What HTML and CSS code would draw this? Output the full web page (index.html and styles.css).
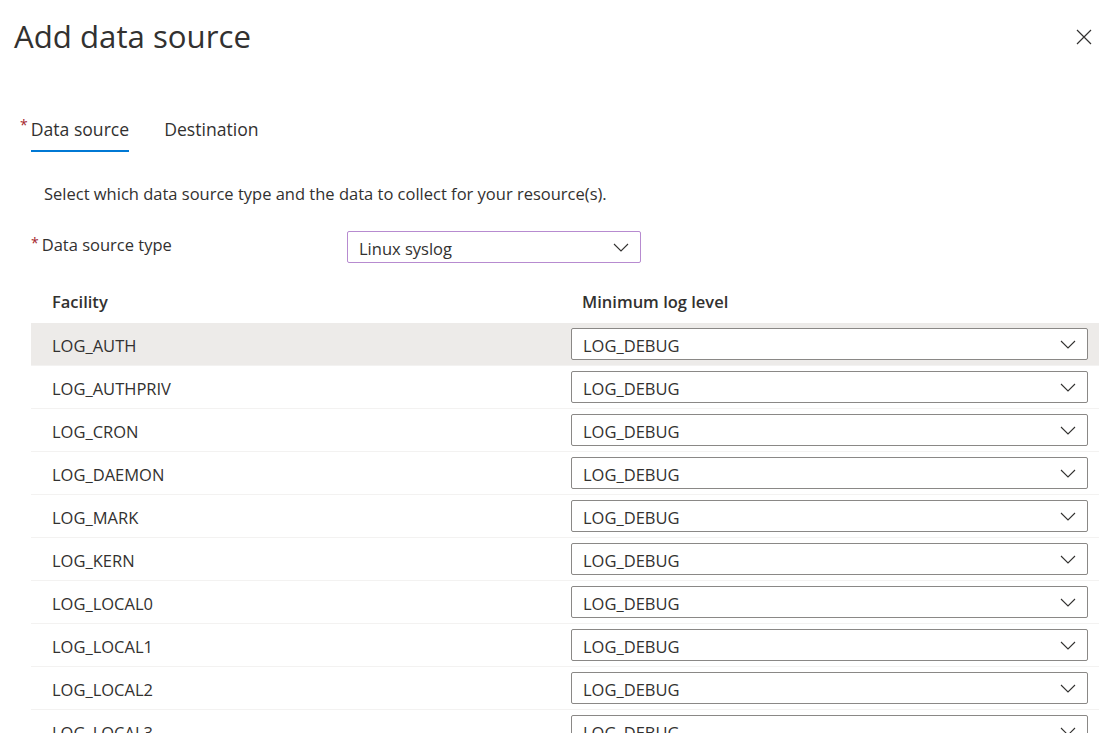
FILE: index.html
```html
<!DOCTYPE html>
<html lang="en">
<head>
<meta charset="utf-8">
<title>Add data source</title>
<link rel="stylesheet" href="styles.css">
</head>
<body>
<div class="panel">
  <div class="header">
    <h1 class="title">Add data source</h1>
    <button class="close" aria-label="Close">
      <svg width="16" height="16" viewBox="0 0 16 16"><path d="M1 1 L15 15 M15 1 L1 15" stroke="#323130" stroke-width="1.2" fill="none"/></svg>
    </button>
  </div>
  <div class="tabs">
    <div class="tab active"><span class="req">*</span><span class="tab-label">Data source</span></div>
    <div class="tab"><span class="tab-label">Destination</span></div>
  </div>
  <p class="desc">Select which data source type and the data to collect for your resource(s).</p>
  <div class="field">
    <label class="field-label"><span class="req">*</span>Data source type</label>
    <div class="select type-select"><span>Linux syslog</span><svg class="chev" width="16" height="16" viewBox="0 0 16 16"><path d="M1 5 L8 12 L15 5" stroke="#323130" stroke-width="1.1" fill="none"/></svg></div>
  </div>
  <div class="table">
    <div class="thead">
      <div class="cell c1">Facility</div>
      <div class="cell c2">Minimum log level</div>
    </div>
    <div class="row hover"><div class="cell c1">LOG_AUTH</div><div class="cell c2"><div class="select"><span>LOG_DEBUG</span><svg class="chev" width="16" height="16" viewBox="0 0 16 16"><path d="M1 5 L8 12 L15 5" stroke="#323130" stroke-width="1.1" fill="none"/></svg></div></div></div>
    <div class="row"><div class="cell c1">LOG_AUTHPRIV</div><div class="cell c2"><div class="select"><span>LOG_DEBUG</span><svg class="chev" width="16" height="16" viewBox="0 0 16 16"><path d="M1 5 L8 12 L15 5" stroke="#323130" stroke-width="1.1" fill="none"/></svg></div></div></div>
    <div class="row"><div class="cell c1">LOG_CRON</div><div class="cell c2"><div class="select"><span>LOG_DEBUG</span><svg class="chev" width="16" height="16" viewBox="0 0 16 16"><path d="M1 5 L8 12 L15 5" stroke="#323130" stroke-width="1.1" fill="none"/></svg></div></div></div>
    <div class="row"><div class="cell c1">LOG_DAEMON</div><div class="cell c2"><div class="select"><span>LOG_DEBUG</span><svg class="chev" width="16" height="16" viewBox="0 0 16 16"><path d="M1 5 L8 12 L15 5" stroke="#323130" stroke-width="1.1" fill="none"/></svg></div></div></div>
    <div class="row"><div class="cell c1">LOG_MARK</div><div class="cell c2"><div class="select"><span>LOG_DEBUG</span><svg class="chev" width="16" height="16" viewBox="0 0 16 16"><path d="M1 5 L8 12 L15 5" stroke="#323130" stroke-width="1.1" fill="none"/></svg></div></div></div>
    <div class="row"><div class="cell c1">LOG_KERN</div><div class="cell c2"><div class="select"><span>LOG_DEBUG</span><svg class="chev" width="16" height="16" viewBox="0 0 16 16"><path d="M1 5 L8 12 L15 5" stroke="#323130" stroke-width="1.1" fill="none"/></svg></div></div></div>
    <div class="row"><div class="cell c1">LOG_LOCAL0</div><div class="cell c2"><div class="select"><span>LOG_DEBUG</span><svg class="chev" width="16" height="16" viewBox="0 0 16 16"><path d="M1 5 L8 12 L15 5" stroke="#323130" stroke-width="1.1" fill="none"/></svg></div></div></div>
    <div class="row"><div class="cell c1">LOG_LOCAL1</div><div class="cell c2"><div class="select"><span>LOG_DEBUG</span><svg class="chev" width="16" height="16" viewBox="0 0 16 16"><path d="M1 5 L8 12 L15 5" stroke="#323130" stroke-width="1.1" fill="none"/></svg></div></div></div>
    <div class="row"><div class="cell c1">LOG_LOCAL2</div><div class="cell c2"><div class="select"><span>LOG_DEBUG</span><svg class="chev" width="16" height="16" viewBox="0 0 16 16"><path d="M1 5 L8 12 L15 5" stroke="#323130" stroke-width="1.1" fill="none"/></svg></div></div></div>
    <div class="row"><div class="cell c1">LOG_LOCAL3</div><div class="cell c2"><div class="select"><span>LOG_DEBUG</span><svg class="chev" width="16" height="16" viewBox="0 0 16 16"><path d="M1 5 L8 12 L15 5" stroke="#323130" stroke-width="1.1" fill="none"/></svg></div></div></div>
  </div>
</div>
</body>
</html>
```

FILE: styles.css
```css
* { box-sizing: border-box; }
html, body {
  margin: 0;
  padding: 0;
  background: #ffffff;
  overflow: hidden;
  height: 733px;
}
body {
  font-family: "Open Sans", "Noto Sans", "Liberation Sans", sans-serif;
  color: #323130;
  font-size: 16.5px;
}
.panel {
  width: 1113px;
}
.header {
  display: flex;
  justify-content: space-between;
  align-items: flex-start;
  padding: 12px 21px 0 14px;
  height: 108px;
}
.title {
  margin: 0;
  font-size: 31.2px;
  font-weight: 400;
  line-height: 48px;
  color: #323130;
}
.close {
  border: 0;
  background: transparent;
  padding: 0;
  margin-top: 17px;
  width: 16px;
  height: 16px;
  cursor: pointer;
}
.close svg { display: block; }
.tabs {
  display: flex;
  padding-left: 20px;
  gap: 35px;
  height: 44px;
}
.tab {
  display: flex;
  align-items: flex-start;
  height: 44px;
}
.tab-label {
  font-size: 17.6px;
  line-height: 42px;
  display: block;
}
.tab.active .tab-label {
  border-bottom: 2px solid #0078d4;
  height: 44px;
  font-weight: 500;
}
.req {
  color: #a4262c;
  font-size: 14px;
  line-height: 34px;
  margin-right: 3px;
}
.desc {
  margin: 30px 0 0 44px;
  font-size: 16.5px;
  line-height: 24px;
}
.field {
  display: flex;
  align-items: flex-start;
  margin: 25px 0 0 31px;
  height: 48px;
}
.field-label {
  width: 316px;
  font-size: 16.5px;
  line-height: 26px;
  padding-top: 1px;
  display: flex;
}
.field-label .req { line-height: 22px; }
.select {
  display: flex;
  align-items: center;
  justify-content: space-between;
  height: 32px;
  border: 1px solid #8a8886;
  border-radius: 2px;
  padding: 0 11px 0 11px;
  font-size: 16.5px;
  background: #fff;
}
.select span { padding-top: 2px; }
.type-select {
  width: 294px;
  border-color: #b78bd0;
  margin-top: 0;
}
.chev { display: block; flex: none; }
.table {
  margin-left: 31px;
  width: 1068px;
}
.thead {
  display: flex;
  height: 44px;
  align-items: center;
  font-weight: 600;
}
.row {
  display: flex;
  height: 43px;
  align-items: center;
  border-bottom: 1px solid #f3f2f1;
}
.row.hover { background: #edebe9; }
.row .cell.c1 { padding-top: 2px; }
.cell.c1 {
  width: 540px;
  padding-left: 21px;
}
.cell.c2 {
  flex: 1;
  padding-right: 11px;
}
.thead .cell.c2 { padding-left: 11px; }
```
